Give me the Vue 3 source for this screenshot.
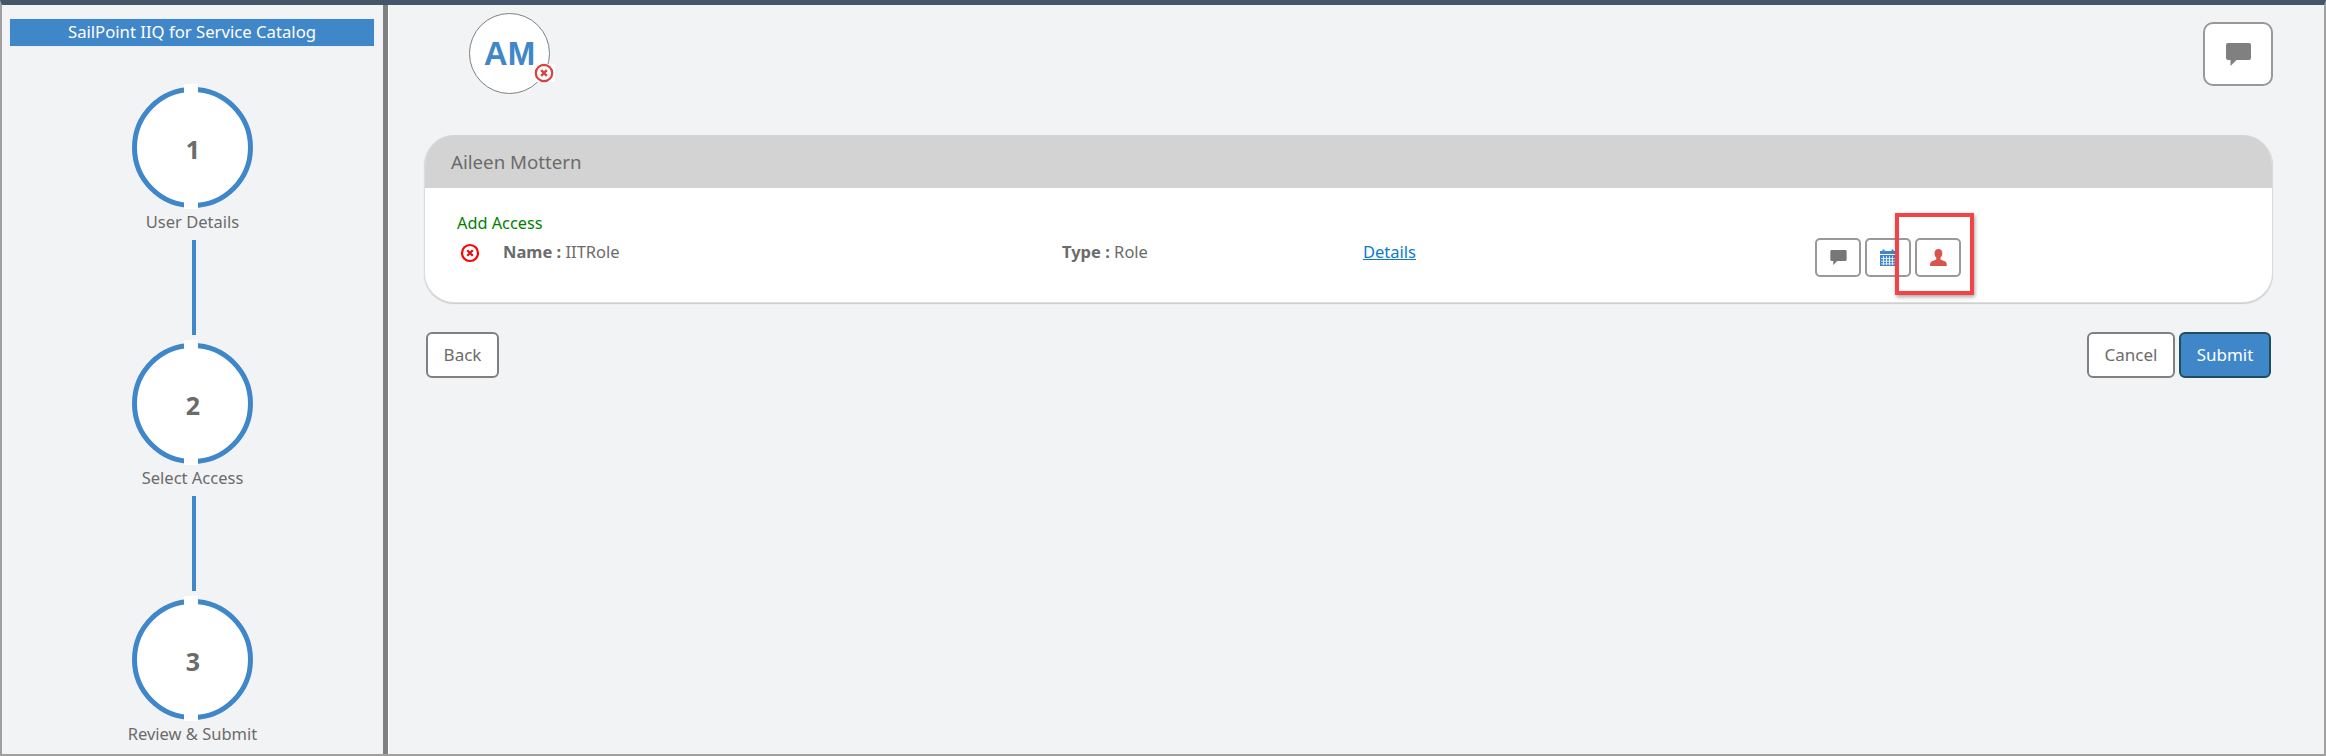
<script setup>
const steps = [
  { n: 1, label: 'User Details' },
  { n: 2, label: 'Select Access' },
  { n: 3, label: 'Review & Submit' },
]
</script>

<template>
  <div class="page">
    <aside class="side">
      <div class="title">SailPoint IIQ for Service Catalog</div>
      <div class="steps">
        <div v-for="(s, i) in steps" :key="s.n" class="step">
          <div class="circle"><span class="gap top"></span><span class="gap bottom"></span>{{ s.n }}</div>
          <div class="label">{{ s.label }}</div>
          <div v-if="i < steps.length - 1" class="line"></div>
        </div>
      </div>
    </aside>
    <main class="main">
      <div class="topbar">
        <div class="avatar">AM
          <span class="badge">
            <svg width="20" height="20" viewBox="0 0 20 20"><circle cx="10" cy="10" r="8.2" fill="#fff" stroke="#d9403f" stroke-width="2.2"/><path d="M7.2 7.2l5.6 5.6M12.8 7.2l-5.6 5.6" stroke="#d9403f" stroke-width="2.4"/></svg>
          </span>
        </div>
        <button class="icon-btn big">
          <svg width="25" height="23" viewBox="0 0 25 23"><path d="M2 0h21a2 2 0 0 1 2 2v13a2 2 0 0 1-2 2H10.500L4.500 23v-6H2a2 2 0 0 1-2-2V2a2 2 0 0 1 2-2z" fill="#808080"/></svg>
        </button>
      </div>
      <section class="card">
        <header class="card-head">Aileen Mottern</header>
        <div class="card-body">
          <div class="add">Add Access</div>
          <div class="row">
            <svg class="rm" width="20" height="20" viewBox="0 0 20 20"><circle cx="10" cy="10" r="8" fill="none" stroke="#f00" stroke-width="2.2"/><path d="M7.200 7.200l5.600 5.600M12.800 7.200l-5.600 5.600" stroke="#e01010" stroke-width="2.200"/></svg>
            <div class="name"><b>Name :</b> IITRole</div>
            <div class="type"><b>Type :</b> Role</div>
            <a class="details" href="#"><span>Details</span></a>
            <div class="actions">
              <button class="icon-btn">
                <svg width="17" height="15" viewBox="0 0 25 23"><path d="M2 0h21a2 2 0 0 1 2 2v13a2 2 0 0 1-2 2H10.500L4.500 23v-6H2a2 2 0 0 1-2-2V2a2 2 0 0 1 2-2z" fill="#777"/></svg>
              </button>
              <button class="icon-btn">
                <svg width="16" height="17" viewBox="0 0 16 17"><path d="M0 2h2.500V0.500h2V2h7V0.500h2V2H16v3H0z" fill="#3f87c9"/><path d="M0 6h16v11H0z" fill="#3f87c9"/><path d="M1.200 9.500h13.600M1.200 12.200h13.600M1.200 14.900h13.600M3.500 7v9M6.500 7v9M9.500 7v9M12.500 7v9" stroke="#fff" stroke-width=".8"/></svg>
              </button>
              <button class="icon-btn">
                <svg width="17" height="17" viewBox="0 0 17 17"><path d="M8.500 0c2.500 0 3.800 1.800 3.800 4.200 0 2-.8 3.700-1.800 4.600v1.600c1.800.9 5.500 1.600 6 3.600.2.900.3 1.800.3 3H0c0-1.200.1-2.100.3-3 .5-2 4.200-2.700 6-3.600V8.800C5.300 7.900 4.500 6.200 4.500 4.200 4.500 1.800 6 0 8.500 0z" fill="#d9534f"/></svg>
              </button>
              <span class="annot"></span>
            </div>
          </div>
        </div>
      </section>
      <div class="foot">
        <button class="btn back">Back</button>
        <div class="foot-right">
          <button class="btn cancel">Cancel</button>
          <button class="btn submit">Submit</button>
        </div>
      </div>
    </main>
  </div>
</template>

<style>
html, body { margin: 0; background: #f2f3f5; }
</style>

<style scoped>
.page {
  box-sizing: border-box;
  width: 2326px;
  height: 756px;
  display: flex;
  overflow: hidden;
  background: #f2f3f5;
  border-top: 5px solid #44566a;
  border-left: 2px solid #a0a0a0;
  border-right: 2px solid #a0a0a0;
  border-bottom: 2px solid #a0a0a0;
  font-family: "Noto Sans", sans-serif;
  color: #6b6b6b;
  font-size: 16px;
  position: relative;
}
.page::before {
  content: "";
  position: absolute;
  left: -2px;
  right: -2px;
  top: -5px;
  height: 2px;
  background: #8f9499;
}
.side {
  box-sizing: border-box;
  width: 386px;
  flex: none;
  padding: 14px 9px 0 8px;
  border-right: 5px solid #808080;
  box-shadow: 1px 0 0 #fff;
}
.title {
  height: 27px;
  line-height: 26px;
  width: 364px;
  background: #3f87c9;
  color: #fff;
  text-align: center;
  font-size: 16.7px;
  box-shadow: 0 0 0 1px #e8f0f8;
}
.steps {
  display: flex;
  flex-direction: column;
  align-items: center;
  margin-top: 41px;
}
.step {
  display: flex;
  flex-direction: column;
  align-items: center;
  width: 100%;
}
.circle {
  box-sizing: border-box;
  position: relative;
  width: 121px;
  height: 121px;
  border: 5px solid #3f87c9;
  border-radius: 50%;
  background: #fff;
  display: flex;
  align-items: center;
  justify-content: center;
  font-size: 25px;
  font-weight: 700;
  padding: 3px 0 0 2px;
}
.gap {
  position: absolute;
  left: 47px;
  width: 14px;
  height: 9px;
  background: #fff;
}
.gap.top { top: -8px; }
.gap.bottom { bottom: -6px; }
.label {
  font-size: 16.5px;
  line-height: 24px;
  margin-top: 2px;
  padding-left: 1px;
}
.line {
  width: 4px;
  height: 95px;
  margin-top: 6px;
  margin-bottom: 8px;
  margin-left: 3px;
  background: #3f87c9;
}
.main {
  flex: 1;
  min-width: 0;
  padding: 8px 51px 0 36px;
}
.topbar {
  display: flex;
  justify-content: space-between;
  padding-top: 0;
  height: 122px;
}
.avatar {
  box-sizing: border-box;
  position: relative;
  width: 81px;
  height: 81px;
  margin-left: 45px;
  border: 1.5px solid #808080;
  border-radius: 50%;
  background: #fff;
  display: flex;
  align-items: center;
  justify-content: center;
  font-family: "Liberation Sans", sans-serif;
  font-weight: 700;
  font-size: 33px;
  color: #3f87c9;
}
.badge {
  position: absolute;
  left: 63px;
  top: 50px;
  width: 22px;
  height: 18px;
  background: #fff;
  display: flex;
  align-items: center;
  justify-content: center;
}
.icon-btn {
  box-sizing: border-box;
  width: 46px;
  height: 39px;
  padding: 0;
  border: 2px solid #999;
  border-radius: 5px;
  background: #fff;
  display: flex;
  align-items: center;
  justify-content: center;
}
.icon-btn.big {
  width: 70px;
  height: 64px;
  border-radius: 10px;
  margin-top: 9px;
}
.card {
  box-sizing: border-box;
  height: 168px;
  border-radius: 30px;
  overflow: hidden;
  background: #fff;
  border: 1px solid #dcdcdc;
  border-top: 0;
  box-shadow: 0 1px 1px #ccc;
}
.card-head {
  box-sizing: border-box;
  height: 53px;
  background: #d3d3d3;
  padding: 1px 0 0 26px;
  line-height: 51px;
  font-size: 18.7px;
}
.card-body {
  padding: 23px 0 0 31px;
}
.add {
  color: #008000;
  font-size: 16.3px;
  line-height: 24px;
  padding-left: 1px;
}
.row {
  display: flex;
  align-items: flex-start;
  line-height: 24px;
  font-size: 16.5px;
  margin-top: 2px;
}
.rm {
  margin: 6px 0 0 4px;
  flex: none;
}
.name { width: 559px; margin-left: 23px; padding-top: 3px; flex: none; }
.type { width: 301px; padding-top: 3px; flex: none; }
.details {
  width: 452px;
  flex: none;
  color: #0a7cc7;
  padding-top: 3px;
}
.details span {
  text-decoration: underline;
  text-decoration-skip-ink: none;
}
.actions {
  display: flex;
  gap: 4px;
  position: relative;
  margin-top: 1px;
}
.annot {
  position: absolute;
  left: 80px;
  top: -25px;
  width: 79px;
  height: 82px;
  box-sizing: border-box;
  border: 4px solid #f44346;
  box-shadow: 1px 2px 4px rgba(0,0,0,.35);
}
.foot {
  display: flex;
  justify-content: space-between;
  margin-top: 29px;
  padding-left: 2px;
  padding-right: 2px;
}
.foot-right { display: flex; gap: 4px; }
.btn {
  box-sizing: border-box;
  height: 46px;
  border: 2px solid #808080;
  border-radius: 6px;
  background: #fff;
  color: #6b6b6b;
  font-family: inherit;
  font-size: 17px;
  padding: 0 0 2px;
}
.back { width: 73px; }
.cancel { width: 88px; }
.submit { width: 92px; background: #3f87c9; color: #fff; border-color: #1f4f5f; }
</style>
